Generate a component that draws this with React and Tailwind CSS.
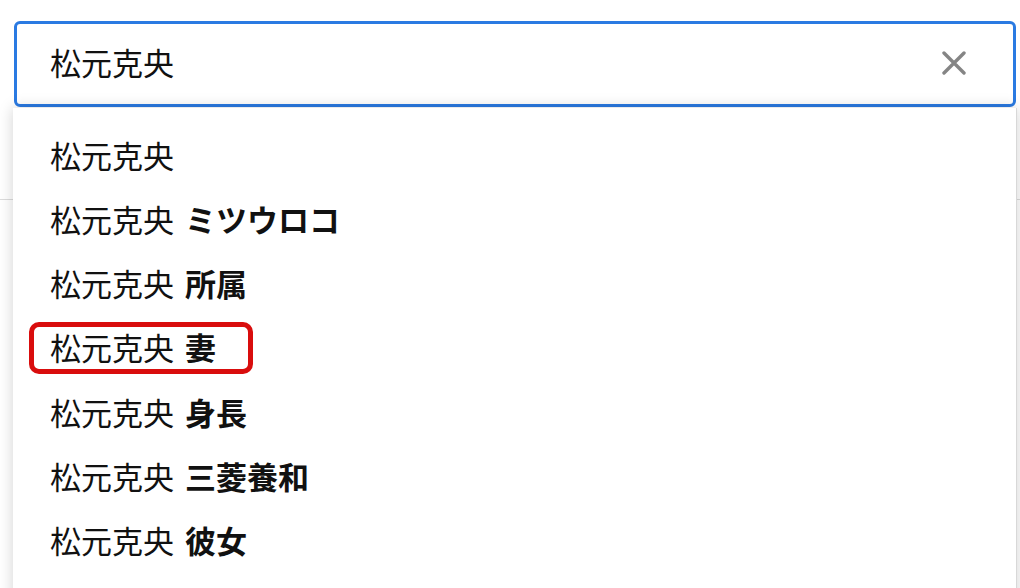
import React from "react";

const suggestions = [
  { base: "松元克央", extra: "" },
  { base: "松元克央", extra: "ミツウロコ" },
  { base: "松元克央", extra: "所属" },
  { base: "松元克央", extra: "妻", marked: true },
  { base: "松元克央", extra: "身長" },
  { base: "松元克央", extra: "三菱養和" },
  { base: "松元克央", extra: "彼女" },
];

const font = { fontFamily: '"Noto Sans CJK JP", "Noto Sans", sans-serif' };

const App = () => {
  return (
    <div className="relative w-[1020px] h-[588px] overflow-hidden bg-white text-[#111]" style={font}>
      {/* page behind the dropdown */}
      <div className="pt-[199px]">
        <div className="h-px bg-[#dcdcdc]" />
      </div>

      {/* search box */}
      <div className="absolute left-[14px] top-[21px] w-[1002px] h-[86px] rounded-[6px] border-[3px] border-[#2a7ae2] bg-white flex items-center pl-[33px] pr-[47px]">
        <span className="text-[31px] leading-none flex-1 pb-[5px]">松元克央</span>
        <svg width="24" height="24" viewBox="0 0 24 24" className="text-[#858585] -mt-[2px]">
          <path d="M2 2 L22 22 M22 2 L2 22" stroke="currentColor" strokeWidth="3.4" strokeLinecap="round" />
        </svg>
      </div>

      {/* dropdown */}
      <div className="absolute left-[13px] top-[108px] w-[1004px] h-[500px] bg-white shadow-[0_0_14px_rgba(0,0,0,0.18)] border-r border-[#d8d8d8] pt-[14px]">
        {suggestions.map((s, i) => (
          <div key={i} className="h-[64.3px] flex items-center pl-[37px]">
            <span
              className={`flex items-center text-[31px] leading-none ${
                s.marked ? "-ml-[21px] pl-[16px] pr-[32px] h-[52px] mt-[2px] border-[5px] border-[#d90d0d] rounded-[10px]" : ""
              }`}
            >
              <span className={s.marked ? "-mt-[3px]" : ""}>{s.base}</span>
              {s.extra && <span className={`font-bold ml-[11px] ${s.marked ? "-mt-[3px]" : ""}`}>{s.extra}</span>}
            </span>
          </div>
        ))}
      </div>
    </div>
  );
};

export default App;
